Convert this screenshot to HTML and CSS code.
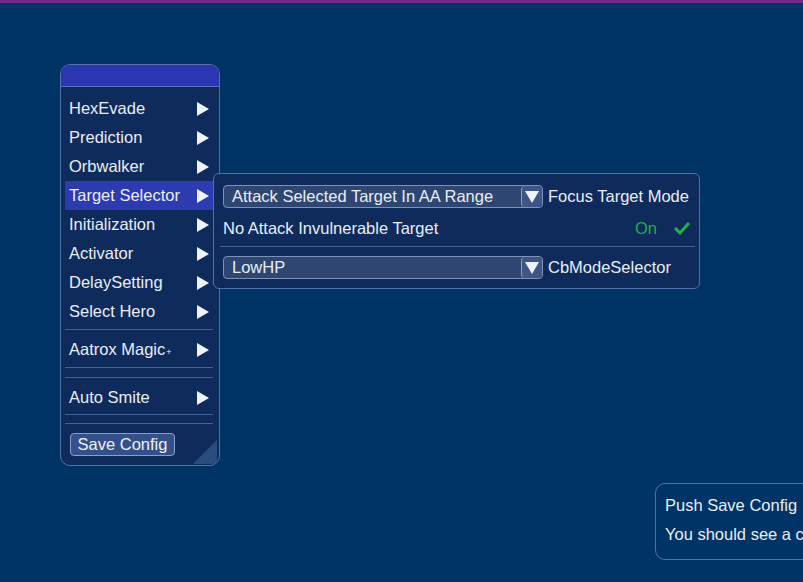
FILE: index.html
```html
<!DOCTYPE html>
<html>
<head>
  <title>Menu</title>
  <link rel="stylesheet" href="styles.css">
</head>
<body>
  <div class="topbar"></div>

  <div class="main-menu">
    <div class="menu-head"></div>
    <div class="menu-body">
      <div class="item"><span>HexEvade</span><span class="arrow"></span></div>
      <div class="item"><span>Prediction</span><span class="arrow"></span></div>
      <div class="item"><span>Orbwalker</span><span class="arrow"></span></div>
      <div class="item active"><span>Target Selector</span><span class="arrow"></span></div>
      <div class="item"><span>Initialization</span><span class="arrow"></span></div>
      <div class="item"><span>Activator</span><span class="arrow"></span></div>
      <div class="item"><span>DelaySetting</span><span class="arrow"></span></div>
      <div class="item"><span>Select Hero</span><span class="arrow"></span></div>
      <div class="sep sep-a"></div>
      <div class="item"><span>Aatrox Magic<small>+</small></span><span class="arrow"></span></div>
      <div class="sep sep-b"></div>
      <div class="sep sep-c"></div>
      <div class="item"><span>Auto Smite</span><span class="arrow"></span></div>
      <div class="sep sep-d"></div>
      <div class="sep sep-e"></div>
      <button class="save-btn">Save Config</button>
    </div>
    <div class="grip"></div>
  </div>

  <div class="sub-menu">
    <div class="row">
      <div class="dropdown">
        <span>Attack Selected Target In AA Range</span>
        <span class="drop-btn"></span>
      </div>
      <span class="label">Focus Target Mode</span>
    </div>
    <div class="row toggle-row">
      <span>No Attack Invulnerable Target</span>
      <span class="state">On
        <svg width="18" height="14" viewBox="0 0 18 14"><path d="M2 7 L7 12 L16 2" fill="none" stroke="#23b04a" stroke-width="3"/></svg>
      </span>
    </div>
    <div class="sub-sep"></div>
    <div class="row">
      <div class="dropdown">
        <span>LowHP</span>
        <span class="drop-btn"></span>
      </div>
      <span class="label">CbModeSelector</span>
    </div>
  </div>

  <div class="notice">
    <div class="notice-title">Push Save Config</div>
    <div>You should see a confirmation</div>
  </div>
</body>
</html>
```

FILE: styles.css
```css
html, body {
  margin: 0;
  height: 100%;
  overflow: hidden;
}

body {
  background-color: #003366;
  font-family: "Liberation Sans", Arial, sans-serif;
  font-size: 16.5px;
  color: #e9eef6;
  position: relative;
}

.topbar {
  height: 3px;
  background-color: #6b2c8e;
}

/* left menu window */
.main-menu {
  position: absolute;
  left: 60px;
  top: 64px;
  width: 158px;
  height: 400px;
  background-color: #0e2b5c;
  border: 1px solid #5470a8;
  border-radius: 10px;
  overflow: hidden;
}

.menu-head {
  height: 21px;
  background-color: #2a36b2;
  border-bottom: 1px solid #5a72c0;
}

.menu-body {
  padding: 7px 5px 0 4px;
  display: flex;
  flex-direction: column;
}

.item {
  height: 29px;
  display: flex;
  align-items: center;
  justify-content: space-between;
  padding: 0 5px 0 4px;
}

.item small {
  font-size: 9px;
  margin-left: 1px;
}

.item.active {
  background-color: #2c3bb0;
}

.arrow {
  width: 0;
  height: 0;
  border-top: 7px solid transparent;
  border-bottom: 7px solid transparent;
  border-left: 12px solid #eef2fa;
}

.sep {
  height: 1px;
  background-color: #42649a;
  margin: 0 1px 0 0;
}

.sep-a { margin-top: 3px; margin-bottom: 5px; }
.sep-b { margin-top: 3px; }
.sep-c { margin-top: 9px; margin-bottom: 5px; }
.sep-d { margin-top: 2px; }
.sep-e { margin-top: 8px; margin-bottom: 9px; }

.save-btn {
  align-self: flex-start;
  margin-left: 5px;
  width: 105px;
  height: 23px;
  padding: 0;
  font-family: "Liberation Sans", Arial, sans-serif;
  font-size: 16.5px;
  color: #eef2fa;
  background-color: #34508a;
  border: 1px solid #8aa0c8;
  border-radius: 4px;
}

.grip {
  position: absolute;
  right: 2px;
  bottom: 1px;
  width: 24px;
  height: 24px;
  background-color: #2b4c7e;
  clip-path: polygon(100% 0, 100% 100%, 0 100%);
}

/* settings window beside the menu */
.sub-menu {
  position: absolute;
  left: 213px;
  top: 173px;
  width: 476px;
  height: 103px;
  padding: 11px 0 0 9px;
  background-color: #0e2b5c;
  border: 1px solid #5470a8;
  border-radius: 6px;
}

.row {
  display: flex;
  align-items: center;
}

.dropdown {
  width: 310px;
  height: 21px;
  display: flex;
  align-items: center;
  justify-content: space-between;
  background-color: #2e4672;
  border: 1px solid #7c92b8;
  border-radius: 4px;
  padding-left: 8px;
}

.drop-btn {
  width: 20px;
  height: 21px;
  background-color: #3d5587;
  border-left: 1px solid #8aa0c8;
  border-radius: 4px;
  display: flex;
  align-items: center;
  justify-content: center;
}

.drop-btn::after {
  content: "";
  border-left: 7px solid transparent;
  border-right: 7px solid transparent;
  border-top: 12px solid #eef2fa;
}

.label {
  margin-left: 5px;
}

.toggle-row {
  height: 30px;
  margin-top: 5px;
  justify-content: space-between;
  padding-right: 8px;
}

.state {
  color: #22ad48;
  display: flex;
  align-items: center;
  gap: 16px;
}

.sub-sep {
  height: 1px;
  background-color: #42649a;
  margin: 3px 4px 9px -3px;
}

/* message box in the corner */
.notice {
  position: absolute;
  left: 655px;
  top: 483px;
  width: 200px;
  height: 77px;
  padding: 10px 0 0 9px;
  box-sizing: border-box;
  border: 1px solid #5470a8;
  border-radius: 10px;
  white-space: nowrap;
  line-height: 26px;
}

.notice-title {
  line-height: 22px;
  margin-bottom: 5px;
}
```
